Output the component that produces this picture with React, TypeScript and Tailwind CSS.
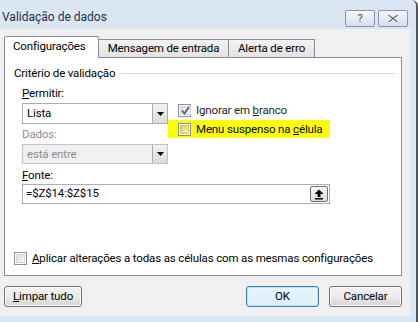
import React from 'react';

const font = { fontFamily: 'Roboto, "Noto Sans", sans-serif' };

const Checkbox: React.FC<{ checked?: boolean; tinted?: boolean }> = ({ checked, tinted }) => (
  <span className="w-[13px] h-[13px] shrink-0 border border-[#8e8f8f] bg-white p-px flex">
    <span
      className={`flex-1 border flex items-center justify-center ${
        tinted
          ? 'border-[#c6c66a] bg-gradient-to-br from-[#d4d46a] to-[#f4f49a]'
          : 'border-[#d6d6d6] bg-gradient-to-br from-[#dcdcdc] to-[#f8f8f8]'
      }`}
    >
      {checked && (
        <svg width="9" height="9" viewBox="0 0 9 9">
          <path d="M1 4.5 L3.5 7.5 L8 1" fill="none" stroke="#4a5f97" strokeWidth="1.8" />
        </svg>
      )}
    </span>
  </span>
);

const DropArrow: React.FC = () => (
  <span className="w-[15px] h-full border-l border-[#acacac] bg-gradient-to-b from-[#f2f2f2] to-[#dcdcdc] flex items-center justify-center">
    <svg width="7" height="4" viewBox="0 0 7 4">
      <path d="M0 0 H7 L3.5 4 Z" fill="#000" />
    </svg>
  </span>
);

const Button: React.FC<{ children: React.ReactNode; className?: string; focused?: boolean }> = ({ children, className, focused }) => (
  <div
    className={`h-[21px] rounded-[3px] border flex items-center whitespace-nowrap text-black ${
      focused
        ? 'border-[#3c7fb1] bg-gradient-to-b from-[#eaf6fd] to-[#d9f0fc] shadow-[inset_0_0_0_1px_#bfe3f7]'
        : 'border-[#707070] bg-gradient-to-b from-[#f2f2f2] via-[#ebebeb] to-[#d5d5d5] shadow-[inset_0_0_0_1px_#fcfcfc]'
    } ${className ?? ''}`}
  >
    {children}
  </div>
);

export default function App() {
  return (
    <div className="w-[418px] h-[322px] bg-[#dbe6f3] border-r-2 border-[#4d5560] rounded-tr-[6px] flex flex-col overflow-hidden" style={font}>
      {/* title bar */}
      <div className="h-[29px] shrink-0 flex items-start mr-[6px]">
        <span className="mt-[8px] ml-[2px] text-[12px] text-[#1f3247]">Validação de dados</span>
        <div className="ml-auto mt-[10px] mr-[2px] flex gap-[3px]">
          <div className="w-[30px] h-[17px] rounded-[2px] border border-[#8798ae] bg-gradient-to-b from-[#f4f7fb] to-[#d6e0ec] flex items-center justify-center text-[11px] leading-none text-[#43505e]">?</div>
          <div className="w-[30px] h-[17px] rounded-[2px] border border-[#8798ae] bg-gradient-to-b from-[#f4f7fb] to-[#d6e0ec] flex items-center justify-center">
            <svg width="12" height="9" viewBox="0 0 12 9">
              <path d="M1.5 1 L10.5 8 M10.5 1 L1.5 8" stroke="#fff" strokeWidth="3" />
              <path d="M1.5 1 L10.5 8 M10.5 1 L1.5 8" stroke="#56626f" strokeWidth="1.2" />
            </svg>
          </div>
        </div>
      </div>

      {/* client area */}
      <div className="flex-1 mr-[6px] mb-[6px] bg-[#f0f0f0] pt-[7px] pl-[4px] pr-[8px] flex flex-col text-[11.5px] tracking-[-0.15px] text-black">
        {/* tabs */}
        <div className="flex items-end h-[21px] whitespace-nowrap">
          <div className="w-[95px] h-[22px] -mb-px relative z-10 bg-white border border-b-0 border-[#898c95] rounded-t-[2px] flex items-center pl-[8px] pb-px">
            Configurações
          </div>
          <div className="w-[131px] h-[18px] -ml-px bg-gradient-to-b from-[#f2f2f2] to-[#e3e3e3] border border-b-0 border-[#898c95] flex items-center justify-center">
            Mensagem de entrada
          </div>
          <div className="w-[87px] h-[18px] -ml-px bg-gradient-to-b from-[#f2f2f2] to-[#e3e3e3] border border-b-0 border-[#898c95] flex items-center justify-center">
            Alerta de erro
          </div>
        </div>

        {/* tab panel */}
        <div className="h-[219px] bg-white border border-[#898c95] pl-[9px] pt-[8px] flex flex-col">
          <div className="flex items-center h-[15px]">
            <span>Critério de validação</span>
            <span className="flex-1 h-px bg-[#dcdcdc] ml-[6px] mr-[6px]" />
          </div>

          <div className="ml-[8px] flex flex-col">
            <div className="mt-[5px] flex">
              <div className="w-[146px] flex flex-col">
                <div className="h-[15px] leading-[15px]"><u>P</u>ermitir:</div>
                <div className="mt-[2px] h-[21px] border border-[#abadb3] bg-white flex">
                  <span className="flex-1 pl-[4px] leading-[19px]">Lista</span>
                  <DropArrow />
                </div>
                <div className="mt-[3px] h-[15px] leading-[15px] text-[#8d8d8d]">Dados:</div>
                <div className="mt-[2px] h-[20px] border border-[#c2c2c2] bg-[#f0f0f0] flex">
                  <span className="flex-1 pl-[4px] leading-[18px] text-[#8d8d8d]">está entre</span>
                  <DropArrow />
                </div>
              </div>
              <div className="pt-[18px] flex flex-col whitespace-nowrap">
                <div className="h-[13px] pl-[10px] flex items-center gap-[5px]">
                  <Checkbox checked />
                  <span className="leading-[13px] text-[#1e1e1e]">Ignorar em <u>b</u>ranco</span>
                </div>
                <div className="mt-[3px] w-[162px] h-[18px] bg-[#ffff00] pl-[10px] flex items-center gap-[5px]">
                  <Checkbox tinted />
                  <span className="leading-[13px]">Menu suspenso na <u>c</u>élula</span>
                </div>
              </div>
            </div>
            <div className="mt-[4px] h-[15px] leading-[15px]"><u>F</u>onte:</div>
            <div className="mt-px w-[308px] h-[20px] border border-[#abadb3] bg-white flex items-center pr-[1px]">
              <span className="flex-1 pl-[3px]">=$Z$14:$Z$15</span>
              <div className="w-[18px] h-[16px] rounded-[2px] border border-[#707070] bg-gradient-to-b from-[#f6f6f6] to-[#dedede] flex items-center justify-center">
                <svg width="10" height="11" viewBox="0 0 10 11">
                  <path d="M5 0.5 L9.5 5 H6.5 V8 H3.5 V5 H0.5 Z" fill="#000" />
                  <rect x="1" y="9" width="8" height="1.5" fill="#000" />
                </svg>
              </div>
            </div>
          </div>

          <div className="mt-auto mb-[9px] flex items-center gap-[5px] whitespace-nowrap">
            <Checkbox />
            <span className="leading-[15px]"><u>A</u>plicar alterações a todas as células com as mesmas configurações</span>
          </div>
        </div>

        {/* buttons */}
        <div className="mt-[10px] flex">
          <Button className="w-[78px] justify-start pl-[8px]"><span><u>L</u>impar tudo</span></Button>
          <Button className="w-[73px] ml-auto justify-center" focused>OK</Button>
          <Button className="w-[73px] ml-[10px] justify-center">Cancelar</Button>
        </div>
      </div>
    </div>
  );
}
